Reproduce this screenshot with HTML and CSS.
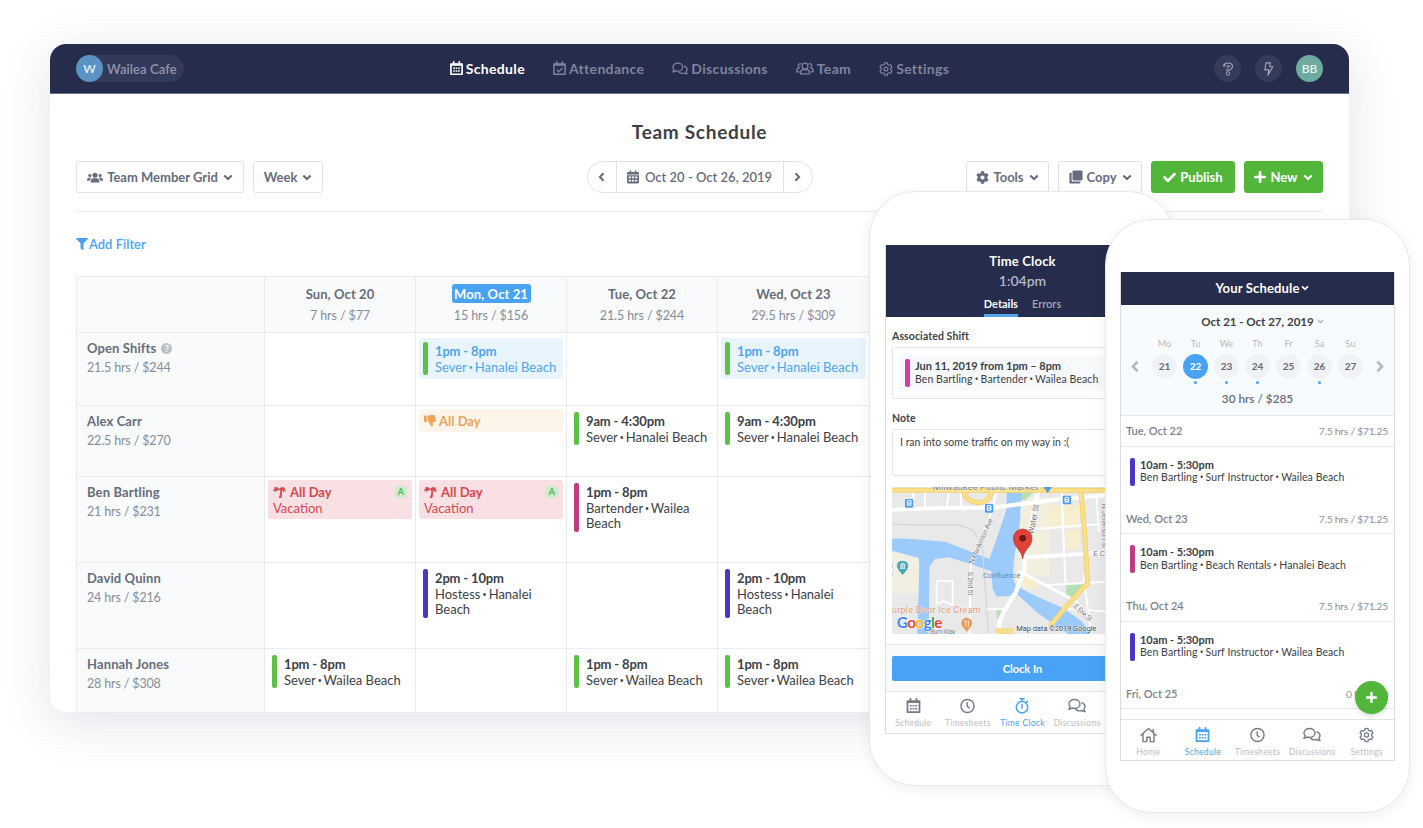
FILE: index.html
```html
<!DOCTYPE html>
<html lang="en">
<head>
  <meta charset="UTF-8" />
  <meta name="viewport" content="width=device-width, initial-scale=1.0"/>
  <title>Team Schedule</title>
  <link rel="stylesheet" href="styles.css">
</head>
<body>

<!-- icon set -->
<svg class="sprite" width="0" height="0">
  <symbol id="i-calendar" viewBox="0 0 14 16">
    <path d="M1 3.2h12v11H1zM4 0.8v2.4M10 0.8v2.4" fill="none" stroke="currentColor" stroke-width="1.8" stroke-linejoin="round" stroke-linecap="round"/>
    <path d="M1 3h12v2H1z" fill="currentColor"/>
    <path d="M3.5 7h1.8v1.6H3.5zM6.1 7h1.8v1.6H6.1zM8.7 7h1.8v1.6H8.7zM3.5 10h1.8v1.6H3.5zM6.1 10h1.8v1.6H6.1zM8.7 10h1.8v1.6H8.7z" fill="currentColor"/>
  </symbol>
  <symbol id="i-calendar-solid" viewBox="0 0 14 16">
    <path d="M4 0.9v3M10 0.9v3" stroke="currentColor" stroke-width="1.8" stroke-linecap="round"/>
    <path fill="currentColor" fill-rule="evenodd" d="M1.3 2.2h11.4Q14 2.2 14 3.5V5H0V3.5Q0 2.2 1.3 2.2zM0 5.9h14v8.3Q14 15.5 12.7 15.5H1.3Q0 15.5 0 14.2zM2 7.5v2h2.5v-2zM5.7 7.5v2h2.6v-2zM9.5 7.5v2H12v-2zM2 11.2v2h2.5v-2zM5.7 11.2v2h2.6v-2zM9.5 11.2v2H12v-2z"/>
  </symbol>
  <symbol id="i-calendar-check" viewBox="0 0 14 16">
    <path d="M1 3.2h12v11H1zM4 0.8v2.4M10 0.8v2.4" fill="none" stroke="currentColor" stroke-width="1.6" stroke-linejoin="round" stroke-linecap="round"/>
    <path d="M1 3h12v2H1z" fill="currentColor"/>
    <path d="M4 9.3l2.2 2.2 4-4" fill="none" stroke="currentColor" stroke-width="1.5"/>
  </symbol>
  <symbol id="i-comments" viewBox="0 0 18 15">
    <path d="M6.5 1C3.4 1 1 2.9 1 5.4c0 1.1.5 2.1 1.2 2.9-.2.9-.7 1.7-1.3 2.4 1.3 0 2.4-.5 3.2-1.2.7.2 1.5.4 2.4.4C9.6 9.9 12 7.9 12 5.4S9.6 1 6.5 1z" fill="none" stroke="currentColor" stroke-width="1.4" stroke-linejoin="round"/>
    <path d="M14 4.3c1.8.6 3 2 3 3.7 0 1.1-.5 2-1.2 2.7.2.9.7 1.7 1.3 2.4-1.3 0-2.4-.4-3.2-1.1-2.6.7-5 .2-6.4-1.3" fill="none" stroke="currentColor" stroke-width="1.4" stroke-linejoin="round" stroke-linecap="round"/>
  </symbol>
  <symbol id="i-users" viewBox="0 0 20 14">
    <g fill="none" stroke="currentColor" stroke-width="1.4" stroke-linejoin="round">
      <circle cx="10" cy="4.3" r="3.3"/>
      <path d="M5 13v-1.5c0-2 1.3-3.3 3-3.6l2 .6 2-.6c1.7.3 3 1.6 3 3.6V13z"/>
      <path d="M6 2.2C4.4 1 2.3 2.2 2.5 4.2c.1 1 .6 1.7 1.3 2C2 6.5.8 7.7.8 9.6v1.2H4M14 2.2c1.6-1.2 3.7 0 3.5 2-.1 1-.6 1.7-1.3 2 1.8.3 3 1.5 3 3.4v1.2H16"/>
    </g>
  </symbol>
  <symbol id="i-users-solid" viewBox="0 0 20 14">
    <g fill="currentColor">
      <circle cx="10" cy="4" r="3.2"/><circle cx="3.4" cy="4.6" r="2"/><circle cx="16.6" cy="4.6" r="2"/>
      <path d="M4.5 13v-1.3c0-2.3 1.6-3.7 3.5-3.7h4c1.9 0 3.5 1.4 3.5 3.7V13q0 .5-.5.5H5q-.5 0-.5-.5zM0 11V9.6C0 8.2 1 7.3 2.3 7.3h2c.5 0 .8.1 1.2.3C4 8.6 3.5 9.8 3.4 11zM20 11V9.6c0-1.4-1-2.3-2.3-2.3h-2c-.5 0-.8.1-1.2.3 1.5 1 2 2.2 2.1 3.4z"/>
    </g>
  </symbol>
  <symbol id="i-cog" viewBox="-24 -24 560 560">
    <path fill="none" stroke="currentColor" stroke-width="48" stroke-linejoin="round" d="M487.4 315.7l-42.6-24.6c4.3-23.2 4.3-47 0-70.2l42.6-24.6c4.9-2.8 7.1-8.6 5.5-14-11.1-35.6-30-67.8-54.7-94.6-3.8-4.1-10-5.1-14.8-2.3L380.8 110c-17.9-15.4-38.5-27.3-60.8-35.1V25.8c0-5.6-3.9-10.5-9.4-11.7-36.7-8.2-74.3-7.8-109.2 0-5.5 1.2-9.4 6.1-9.4 11.7V75c-22.2 7.9-42.8 19.8-60.8 35.1L88.7 85.5c-4.9-2.8-11-1.9-14.8 2.3-24.7 26.7-43.6 58.9-54.7 94.6-1.7 5.4.6 11.2 5.5 14L67.3 221c-4.3 23.2-4.3 47 0 70.2l-42.6 24.6c-4.9 2.8-7.1 8.6-5.5 14 11.1 35.6 30 67.8 54.7 94.6 3.8 4.1 10 5.1 14.8 2.3l42.6-24.6c17.9 15.4 38.5 27.3 60.8 35.1v49.2c0 5.6 3.9 10.5 9.4 11.7 36.7 8.2 74.3 7.8 109.2 0 5.5-1.2 9.4-6.1 9.4-11.7v-49.2c22.2-7.9 42.8-19.8 60.8-35.1l42.6 24.6c4.9 2.8 11 1.9 14.8-2.3 24.7-26.7 43.6-58.9 54.7-94.6 1.5-5.5-.7-11.3-5.6-14.1z"/>
    <circle cx="256" cy="256" r="78" fill="none" stroke="currentColor" stroke-width="48"/>
  </symbol>
  <symbol id="i-cog-solid" viewBox="0 0 512 512">
    <path fill="currentColor" d="M487.4 315.7l-42.6-24.6c4.3-23.2 4.3-47 0-70.2l42.6-24.6c4.9-2.8 7.1-8.6 5.5-14-11.1-35.6-30-67.8-54.7-94.6-3.8-4.1-10-5.1-14.8-2.3L380.8 110c-17.9-15.4-38.5-27.3-60.8-35.1V25.8c0-5.6-3.9-10.5-9.4-11.7-36.7-8.2-74.3-7.8-109.2 0-5.5 1.2-9.4 6.1-9.4 11.7V75c-22.2 7.9-42.8 19.8-60.8 35.1L88.7 85.5c-4.9-2.8-11-1.9-14.8 2.3-24.7 26.7-43.6 58.9-54.7 94.6-1.7 5.4.6 11.2 5.5 14L67.3 221c-4.3 23.2-4.3 47 0 70.2l-42.6 24.6c-4.9 2.8-7.1 8.6-5.5 14 11.1 35.6 30 67.8 54.7 94.6 3.8 4.1 10 5.1 14.8 2.3l42.6-24.6c17.9 15.4 38.5 27.3 60.8 35.1v49.2c0 5.6 3.9 10.5 9.4 11.7 36.7 8.2 74.3 7.8 109.2 0 5.5-1.2 9.4-6.1 9.4-11.7v-49.2c22.2-7.9 42.8-19.8 60.8-35.1l42.6 24.6c4.9 2.8 11 1.9 14.8-2.3 24.7-26.7 43.6-58.9 54.7-94.6 1.5-5.5-.7-11.3-5.6-14.1zM256 336c-44.1 0-80-35.9-80-80s35.9-80 80-80 80 35.9 80 80-35.9 80-80 80z"/>
  </symbol>
  <symbol id="i-question" viewBox="0 0 14 16">
    <path d="M3 5.2C3.5 2.9 5.1 2.5 7 2.5c2.1 0 3.7 1 3.7 2.7C10.7 7.5 7 7.3 7 10" fill="none" stroke="#a7abbd" stroke-width="4.4" stroke-linejoin="round"/>
    <path d="M4 5.1C4.5 3.2 5.6 2.6 7 2.6c2 0 3.5 1 3.5 2.6C10.5 7.3 7 7.3 7 9" fill="none" stroke="#353b5a" stroke-width="2.2"/>
    <circle cx="7" cy="13.2" r="2" fill="#353b5a" stroke="#a7abbd" stroke-width="1.1"/>
  </symbol>
  <symbol id="i-bolt" viewBox="0 0 12 16">
    <path d="M3.2 1h5L7.3 5.5H11L5.3 15l1.2-6H1.8z" fill="none" stroke="currentColor" stroke-width="1.2" stroke-linejoin="round"/>
  </symbol>
  <symbol id="i-down" viewBox="0 0 10 7">
    <path d="M1.3 1.4L5 5.1l3.7-3.7" fill="none" stroke="currentColor" stroke-width="2.1"/>
  </symbol>
  <symbol id="i-left" viewBox="0 0 7 10">
    <path d="M5.5 1.3L1.9 5l3.6 3.7" fill="none" stroke="currentColor" stroke-width="2"/>
  </symbol>
  <symbol id="i-right" viewBox="0 0 7 10">
    <path d="M1.5 1.3L5.1 5 1.5 8.7" fill="none" stroke="currentColor" stroke-width="2"/>
  </symbol>
  <symbol id="i-copy" viewBox="0 0 16 16">
    <rect x="4" y="0.5" width="11.5" height="11.5" rx="1.3" fill="currentColor"/>
    <path d="M3 3H1.8Q.5 3 .5 4.3v9.9q0 1.3 1.3 1.3h9.9q1.3 0 1.3-1.3V13H4.3Q3 13 3 11.7z" fill="currentColor"/>
  </symbol>
  <symbol id="i-check" viewBox="0 0 512 512">
    <path fill="currentColor" d="M173.898 439.404l-166.4-166.4c-9.997-9.997-9.997-26.206 0-36.204l36.203-36.204c9.997-9.998 26.207-9.998 36.204 0L192 312.69 432.095 72.596c9.997-9.997 26.207-9.997 36.204 0l36.203 36.204c9.997 9.997 9.997 26.206 0 36.204l-294.4 294.401c-9.998 9.997-26.207 9.997-36.204-.001z"/>
  </symbol>
  <symbol id="i-plus" viewBox="0 0 12 12">
    <path d="M6 1.2v9.6M1.2 6h9.6" stroke="currentColor" stroke-width="2.7" stroke-linecap="round"/>
  </symbol>
  <symbol id="i-filter" viewBox="0 0 512 512">
    <path fill="currentColor" d="M487.976 0H24.028C2.71 0-8.047 25.866 7.058 40.971L192 225.941V432c0 7.831 3.821 15.17 10.237 19.662l80 55.98C298.02 518.69 320 507.493 320 487.98V225.941l184.947-184.97C520.021 25.896 509.338 0 487.976 0z"/>
  </symbol>
  <symbol id="i-thumb" viewBox="0 0 12 12">
    <path fill="currentColor" d="M.6.6h2.2v6.3H.6q-.6 0-.6-.6V1.2Q0 .6.6.6zM3.6.9C5 .2 6 0 7 0h2.4c1 0 1.5.6 1.4 1.4.6.4.8 1 .5 1.7.6.5.7 1.2.4 1.8.6 1 .1 2-1 2H8.4c.5 1.3.8 2.5.4 3.7-.4 1.3-2 1.2-2.2 0C6.3 8.8 5.5 8 4.5 6.9l-.9-.6z"/>
  </symbol>
  <symbol id="i-palm" viewBox="0 0 13 12">
    <path fill="currentColor" d="M6 3.2C5.3 1 2.7.2.9 1.7L2 2.3C.7 2.7 0 3.9.2 5.2l1.9-.9-.2 1.9L4.6 4.3l1.5-.4h1C7.6 6.3 7 9.2 5.7 12h2.6c.8-2.6 1-5.3.5-7.7l1.1.4.7 1.6.9-1.2 1.3.8c-.1-1.5-.9-2.5-2.2-2.8l1.8-.6C10.7.6 7.2 1 6 3.2z"/>
  </symbol>
  <symbol id="i-clock" viewBox="0 0 16 16">
    <circle cx="8" cy="8" r="7" fill="none" stroke="currentColor" stroke-width="1.5"/>
    <path d="M7.7 4v4.4l2.5 1.9" fill="none" stroke="currentColor" stroke-width="1.5"/>
  </symbol>
  <symbol id="i-stopwatch" viewBox="0 0 14 16">
    <circle cx="7" cy="9.3" r="5.7" fill="none" stroke="currentColor" stroke-width="1.5"/>
    <path d="M5 .8h4M7 .8v2.6M7 6.5v3.7M11.3 4.2l1-1" stroke="currentColor" stroke-width="1.5" stroke-linecap="round"/>
  </symbol>
  <symbol id="i-home" viewBox="0 0 18 16">
    <path d="M1 8.2L9 1.2l8 7M3.2 6.8V15h4v-4.6h3.6V15h4V6.8M14 2v3" fill="none" stroke="currentColor" stroke-width="1.5" stroke-linecap="round" stroke-linejoin="round"/>
  </symbol>
</svg>

<div class="window">
  <header class="navbar">
    <div class="nav-side">
      <div class="workplace"><span class="avatar blue">W</span>Wailea Cafe</div>
    </div>
    <nav class="nav-links">
      <a class="active"><svg width="13" height="15"><use href="#i-calendar"/></svg>Schedule</a>
      <a><svg width="13" height="15"><use href="#i-calendar-check"/></svg>Attendance</a>
      <a><svg width="16" height="14"><use href="#i-comments"/></svg>Discussions</a>
      <a><svg width="18" height="13"><use href="#i-users"/></svg>Team</a>
      <a><svg width="14" height="14"><use href="#i-cog"/></svg>Settings</a>
    </nav>
    <div class="nav-side right">
      <span class="avatar dim"><svg width="12" height="14"><use href="#i-question"/></svg></span>
      <span class="avatar dim"><svg width="11" height="14"><use href="#i-bolt"/></svg></span>
      <span class="avatar green">BB</span>
    </div>
  </header>

  <main class="content">
    <h1>Team Schedule</h1>

    <div class="toolbar">
      <div class="tool-side">
        <button class="btn w-grid"><svg width="16" height="11"><use href="#i-users-solid"/></svg>Team Member Grid<svg class="caret" width="10" height="7"><use href="#i-down"/></svg></button>
        <button class="btn w-week">Week<svg class="caret" width="10" height="7"><use href="#i-down"/></svg></button>
      </div>
      <div class="date-nav">
        <span class="arrow"><svg width="7" height="10"><use href="#i-left"/></svg></span>
        <span class="range"><svg width="12" height="14"><use href="#i-calendar-solid"/></svg>Oct 20 - Oct 26, 2019</span>
        <span class="arrow"><svg width="7" height="10"><use href="#i-right"/></svg></span>
      </div>
      <div class="tool-side right">
        <button class="btn w-tools"><svg width="13" height="13"><use href="#i-cog-solid"/></svg>Tools<svg class="caret" width="10" height="7"><use href="#i-down"/></svg></button>
        <button class="btn w-copy"><svg width="14" height="14"><use href="#i-copy"/></svg>Copy<svg class="caret" width="10" height="7"><use href="#i-down"/></svg></button>
        <button class="btn green w-publish"><svg width="13" height="13"><use href="#i-check"/></svg>Publish</button>
        <button class="btn green w-new"><svg width="12" height="12"><use href="#i-plus"/></svg>New<svg class="caret" width="10" height="7"><use href="#i-down"/></svg></button>
      </div>
    </div>

    <a class="filter"><svg width="12" height="12"><use href="#i-filter"/></svg>Add Filter</a>

    <div class="grid">
      <div class="cell head"></div>
      <div class="cell head"><b>Sun, Oct 20</b><span>7 hrs / $77</span></div>
      <div class="cell head"><b class="today">Mon, Oct 21</b><span>15 hrs / $156</span></div>
      <div class="cell head"><b>Tue, Oct 22</b><span>21.5 hrs / $244</span></div>
      <div class="cell head"><b>Wed, Oct 23</b><span>29.5 hrs / $309</span></div>

      <div class="cell name"><b>Open Shifts <i class="help">?</i></b><span>21.5 hrs / $244</span></div>
      <div class="cell"></div>
      <div class="cell"><div class="shift open"><i class="bar"></i><p><b>1pm - 8pm</b>Sever <i class="sep">•</i> Hanalei Beach</p></div></div>
      <div class="cell"></div>
      <div class="cell"><div class="shift open"><i class="bar"></i><p><b>1pm - 8pm</b>Sever <i class="sep">•</i> Hanalei Beach</p></div></div>

      <div class="cell name"><b>Alex Carr</b><span>22.5 hrs / $270</span></div>
      <div class="cell"></div>
      <div class="cell"><div class="off orange"><b><svg width="12" height="12"><use href="#i-thumb"/></svg>All Day</b></div></div>
      <div class="cell"><div class="shift"><i class="bar"></i><p><b>9am - 4:30pm</b>Sever <i class="sep">•</i> Hanalei Beach</p></div></div>
      <div class="cell"><div class="shift"><i class="bar"></i><p><b>9am - 4:30pm</b>Sever <i class="sep">•</i> Hanalei Beach</p></div></div>

      <div class="cell name"><b>Ben Bartling</b><span>21 hrs / $231</span></div>
      <div class="cell"><div class="off red"><b><svg width="13" height="12"><use href="#i-palm"/></svg>All Day<i class="tag">A</i></b>Vacation</div></div>
      <div class="cell"><div class="off red"><b><svg width="13" height="12"><use href="#i-palm"/></svg>All Day<i class="tag">A</i></b>Vacation</div></div>
      <div class="cell"><div class="shift"><i class="bar pink"></i><p><b>1pm - 8pm</b>Bartender <i class="sep">•</i> Wailea<br>Beach</p></div></div>
      <div class="cell"></div>

      <div class="cell name"><b>David Quinn</b><span>24 hrs / $216</span></div>
      <div class="cell"></div>
      <div class="cell"><div class="shift"><i class="bar purple"></i><p><b>2pm - 10pm</b>Hostess <i class="sep">•</i> Hanalei<br>Beach</p></div></div>
      <div class="cell"></div>
      <div class="cell"><div class="shift"><i class="bar purple"></i><p><b>2pm - 10pm</b>Hostess <i class="sep">•</i> Hanalei<br>Beach</p></div></div>

      <div class="cell name"><b>Hannah Jones</b><span>28 hrs / $308</span></div>
      <div class="cell"><div class="shift"><i class="bar"></i><p><b>1pm - 8pm</b>Sever <i class="sep">•</i> Wailea Beach</p></div></div>
      <div class="cell"></div>
      <div class="cell"><div class="shift"><i class="bar"></i><p><b>1pm - 8pm</b>Sever <i class="sep">•</i> Wailea Beach</p></div></div>
      <div class="cell"><div class="shift"><i class="bar"></i><p><b>1pm - 8pm</b>Sever <i class="sep">•</i> Wailea Beach</p></div></div>
    </div>
  </main>
</div>

<!-- time clock phone -->
<div class="phone phone-clock">
  <div class="screen">
    <div class="clock-head">
      <b>Time Clock</b>
      <span>1:04pm</span>
      <div class="clock-tabs"><a class="active">Details</a><a>Errors</a></div>
    </div>
    <div class="clock-body">
      <label>Associated Shift</label>
      <div class="box shift-box">
        <div class="m-shift"><i class="bar magenta"></i><p><b>Jun 11, 2019 from 1pm – 8pm</b>Ben Bartling <i class="sep">•</i> Bartender <i class="sep">•</i> Wailea Beach</p></div>
      </div>
      <label>Note</label>
      <div class="box note-box">I ran into some traffic on my way in :(</div>
      <svg class="map" width="262" height="147" viewBox="36 36 786 441">
        <rect x="36" y="36" width="786" height="441" fill="#e9e9ea"/>
        <path d="M410 70h100v230H410z" fill="#f3efdf"/>
        <path d="M500 90h100v70H500zM555 165h45v60h-45zM400 300l60 0 20 40-50 0z" fill="#f6eecf"/>
        <path d="M36 230h80v125H36z" fill="#f1eee2"/>
        <path d="M560 328h50l-30 40h-24zM350 403h16v16l-16 12zM420 52h40l-24 24h-16z" fill="#b5dfb6"/>
        <!-- river -->
        <path fill="#9ccbfb" d="M380 52h44l-4 90-18 110-4 58 10 22 60 32 80 34 56 40 30 39h-70l-90-62-68-62-18 10-38 2-12-24-4-52-80-28-50-14-40 6-16 24-2 200h-34l6-200-2-28-80-22V190l60 2 100 8 66 26 66 26 22-60 30-90z"/>
        <!-- minor streets -->
        <path d="M36 148l110 2 90 0 40 14 30 40 10 140 10 130" stroke="#d6d7d9" stroke-width="4" fill="none"/>
        <g stroke="#fff" fill="none" stroke-linejoin="round">
          <path d="M36 104l170-6 130 0 190-24 150-14" stroke-width="12"/>
          <path d="M474 50l-34 160-8 80-24 60-42 70-16 57" stroke-width="13"/>
          <path d="M440 247l240-15" stroke-width="11"/>
          <path d="M432 165l230-18M505 330l175-10M320 403h60M545 50l8 190 4 90M610 300l24 180M650 60l6 110M135 50v50M100 50v48M207 50l-7 48M243 50v48M350 50l-22 80-55 130-5 217" stroke-width="6"/>
          <path d="M420 290l170 90 40 58" stroke-width="9"/>
          <path d="M170 318h48v72l-28-12-20 8zM560 400l120 10" stroke-width="5"/>
        </g>
        <!-- main roads -->
        <g stroke="#f2d06b" stroke-width="15" fill="none"><path d="M36 46h640M603 50l12 140 8 134-72 80-42 50M252 50c4 40 78 48 80 0M345 468h55"/></g>
        <g stroke="#fbe08a" stroke-width="10" fill="none"><path d="M36 46h640M603 50l12 140 8 134-72 80-42 50M252 50c4 40 78 48 80 0M345 468h55"/></g>
        <!-- transit stops -->
        <g fill="#4a9cf0"><rect x="75" y="72" width="25" height="26" rx="4"/><rect x="315" y="87" width="25" height="26" rx="4"/><rect x="548" y="62" width="25" height="26" rx="4"/><path d="M490 36h26l-13 18z"/></g>
        <g fill="none" stroke="#fff" stroke-width="3"><path d="M82 77h11v13H82zM82 84h11M83 94l3-3M92 94l-3-3M322 92h11v13h-11zM322 99h11M323 109l3-3M332 109l-3-3M555 67h11v13h-11zM555 74h11M556 84l3-3M565 84l-3-3"/></g>
        <path d="M68 300l-12-14c-12-24 2-28 12-28s24 6 12 28z" fill="#4aa8b8"/><circle cx="68" cy="273" r="16" fill="#4aa8b8"/>
        <path d="M60 280h16M60 270h16l-8-6zM63 271v8M68 271v8M73 271v8" stroke="#fff" stroke-width="2.5" fill="none"/>
        <path d="M260 470l-14-18h28z" fill="#f0984f"/><circle cx="260" cy="444" r="16" fill="#f0984f"/>
        <path d="M255 436v7q0 3 2 3v9M265 436v19M259 436v7" stroke="#fff" stroke-width="2.5" fill="none"/>
        <!-- labels -->
        <g class="map-text">
          <text x="158" y="45" class="market" textLength="316">Milwaukee Public Market</text>
          <text x="36" y="413" class="poi" textLength="266">urple Door Ice Cream</text>
          <text x="309" y="308" class="water" textLength="112">Confluence</text>
          <text transform="translate(279 268) rotate(-66)" textLength="146">N Plankinton Ave</text>
          <text transform="translate(263 290) rotate(90)" textLength="72">S 2nd St</text>
          <text transform="translate(460 178) rotate(-79)" class="road" textLength="90">Water St</text>
          <text transform="translate(666 86) rotate(90)" textLength="134">N Jefferson St</text>
          <text x="640" y="242" class="road">E C</text>
          <text transform="translate(580 396) rotate(42)" textLength="66">E Erie St</text>
          <text x="150" y="478" textLength="76">Bum Way</text>
          <text x="33" y="278">l</text><text x="33" y="303">l</text>
          <text x="409" y="469" class="credit" textLength="240">Map data ©2019 Google</text>
        </g>
        <text x="50" y="459" class="google" textLength="137"><tspan fill="#4285f4">G</tspan><tspan fill="#ea4335">o</tspan><tspan fill="#fbbc05">o</tspan><tspan fill="#4285f4">g</tspan><tspan fill="#34a853">l</tspan><tspan fill="#ea4335">e</tspan></text>
        <!-- pin -->
        <path d="M428 252c-2-26-28-36-28-62a28 28 0 0 1 56 0c0 26-26 36-28 62z" fill="#dd4339" stroke="#b73229" stroke-width="2"/>
        <circle cx="428" cy="190" r="10" fill="#6b1a15"/>
      </svg>
    </div>
    <div class="clock-action"><button>Clock In</button></div>
    <div class="tabbar">
      <a><svg width="15" height="16"><use href="#i-calendar"/></svg>Schedule</a>
      <a><svg width="15" height="15"><use href="#i-clock"/></svg>Timesheets</a>
      <a class="active"><svg width="14" height="16"><use href="#i-stopwatch"/></svg>Time Clock</a>
      <a><svg width="18" height="15"><use href="#i-comments"/></svg>Discussions</a>
      <a></a>
    </div>
  </div>
</div>

<!-- schedule phone -->
<div class="phone phone-schedule">
  <div class="screen">
    <div class="sched-head">Your Schedule<svg width="8" height="6"><use href="#i-down"/></svg></div>
    <div class="week">
      <div class="week-range">Oct 21 - Oct 27, 2019<svg width="7" height="5"><use href="#i-down"/></svg></div>
      <div class="days">
        <svg class="prev" width="10" height="13"><use href="#i-left"/></svg>
        <div class="day"><span>Mo</span><b>21</b></div>
        <div class="day on dot"><span>Tu</span><b>22</b></div>
        <div class="day dot"><span>We</span><b>23</b></div>
        <div class="day dot"><span>Th</span><b>24</b></div>
        <div class="day"><span>Fr</span><b>25</b></div>
        <div class="day dot"><span>Sa</span><b>26</b></div>
        <div class="day"><span>Su</span><b>27</b></div>
        <svg class="next" width="10" height="13"><use href="#i-right"/></svg>
      </div>
      <div class="week-total">30 hrs / $285</div>
    </div>
    <div class="list">
      <div class="list-head"><b>Tue, Oct 22</b><span>7.5 hrs / $71.25</span></div>
      <div class="m-shift"><i class="bar purple"></i><p><b>10am - 5:30pm</b>Ben Bartling <i class="sep">•</i> Surf Instructor <i class="sep">•</i> Wailea Beach</p></div>
      <div class="list-head"><b>Wed, Oct 23</b><span>7.5 hrs / $71.25</span></div>
      <div class="m-shift"><i class="bar pink"></i><p><b>10am - 5:30pm</b>Ben Bartling <i class="sep">•</i> Beach Rentals <i class="sep">•</i> Hanalei Beach</p></div>
      <div class="list-head"><b>Thu, Oct 24</b><span>7.5 hrs / $71.25</span></div>
      <div class="m-shift"><i class="bar purple"></i><p><b>10am - 5:30pm</b>Ben Bartling <i class="sep">•</i> Surf Instructor <i class="sep">•</i> Wailea Beach</p></div>
      <div class="list-head"><b>Fri, Oct 25</b><span>0 hrs / $0</span></div>
      <button class="fab"><svg width="11" height="11"><use href="#i-plus"/></svg></button>
    </div>
    <div class="tabbar">
      <a><svg width="17" height="15"><use href="#i-home"/></svg>Home</a>
      <a class="active"><svg width="15" height="16"><use href="#i-calendar"/></svg>Schedule</a>
      <a><svg width="15" height="15"><use href="#i-clock"/></svg>Timesheets</a>
      <a><svg width="18" height="15"><use href="#i-comments"/></svg>Discussions</a>
      <a><svg width="15" height="15"><use href="#i-cog"/></svg>Settings</a>
    </div>
  </div>
</div>

</body>
</html>
```

FILE: styles.css
```css
* { box-sizing: border-box; }
body {
  font-family: Lato, "Open Sans", sans-serif;
  margin: 0; padding: 44px 0 0 50px;
  width: 1423px;
  height: 828px;
  overflow: hidden;
  position: relative;
  background: #fff;
  font-size: 13px;
  color: #3c4148;
}
h1, p { margin: 0; }
b { font-weight: 700; }
i { font-style: normal; }
svg { display: block; flex: none; }
.sprite { position: absolute; }
button { font-family: inherit; padding: 0; margin: 0; border: none; }

.window {
  width: 1299px;
  height: 668px;
  border-radius: 16px;
  overflow: hidden;
  background: #fff;
  box-shadow: 0 10px 50px rgba(40,60,100,0.14);
}

/* navbar */
.navbar {
  height: 50px;
  padding: 0 26px;
  display: flex;
  align-items: center;
  background: #262c4b;
  border-bottom: 1px solid #6b7088;
}
.nav-side { flex: 1; display: flex; }
.nav-side.right { justify-content: flex-end; gap: 14px; }
.workplace {
  display: flex;
  align-items: center;
  gap: 4px;
  height: 27px;
  padding-right: 7px;
  border-radius: 14px;
  background: #333958;
  color: #9196ae;
  font-weight: 600;
  letter-spacing: 0.1px;
}
.avatar {
  width: 27px;
  height: 27px;
  border-radius: 50%;
  display: flex;
  align-items: center;
  justify-content: center;
  color: #e8f2f3;
  font-size: 12px;
  font-weight: 600;
}
.avatar.blue { background: #5b93c4; }
.avatar.green { background: #6cab9d; }
.avatar.dim { background: #353b5a; color: #a7abbd; }
.nav-links { display: flex; gap: 28px; }
.nav-links a {
  display: flex;
  align-items: center;
  gap: 3px;
  color: #7f849e;
  font-size: 14px;
  font-weight: 700;
  letter-spacing: 0.33px;
}
.nav-links .active { color: #fff; }

/* page */
.content { padding: 0 26px; }
h1 {
  margin-top: 26px;
  height: 24px;
  line-height: 24px;
  text-align: center;
  font-size: 19px;
  letter-spacing: 0.7px;
}
.toolbar {
  display: flex;
  align-items: center;
  margin-top: 17px;
  padding-bottom: 18px;
  border-bottom: 1px solid #e9ebed;
}
.tool-side { flex: 1; display: flex; gap: 9px; }
.tool-side.right { justify-content: flex-end; }
.btn {
  height: 32px;
  display: flex;
  align-items: center;
  justify-content: center;
  gap: 4px;
  border: 1px solid #dfe2e6;
  border-radius: 3px;
  background: #fff;
  color: #666c7d;
  font-size: 13px;
  font-weight: 700;
}
.btn .caret { margin-left: 1px; }
.btn.green { background: #52b63b; border-color: #52b63b; color: #fff; }
.w-grid { width: 168px; }
.w-week { width: 70px; }
.w-tools { width: 83px; }
.w-copy { width: 84px; }
.w-publish { width: 84px; }
.w-new { width: 79px; }
.date-nav {
  display: flex;
  width: 226px;
  height: 32px;
  border: 1px solid #dfe2e6;
  border-radius: 16px;
  color: #666c7d;
  font-weight: 600;
}
.date-nav span { display: flex; align-items: center; justify-content: center; }
.date-nav .arrow { flex: 1; }
.date-nav .range {
  width: 168px;
  gap: 6px;
  border: solid #dfe2e6;
  border-width: 0 1px;
}
.filter {
  display: flex;
  align-items: center;
  gap: 1px;
  height: 20px;
  margin: 22px 0 22px 0;
  color: #48a3f3;
  font-weight: 600;
}

/* schedule grid */
.grid {
  display: grid;
  grid-template-columns: 188px 151px 151px 151px 152px;
  grid-template-rows: 56px 73px 71px 86px 86px 72px;
  width: 794px;
  border-top: 1px solid #e9ecef;
  border-left: 1px solid #e9ecef;
}
.cell {
  border-right: 1px solid #e9ecef;
  border-bottom: 1px solid #e9ecef;
  padding: 3px;
}
.head {
  background: #f8fafc;
  text-align: center;
  color: #666c78;
  padding-top: 7px;
}
.head b, .head span { display: block; line-height: 20px; }
.head b { letter-spacing: 0.1px; }
.head span { color: #878d98; font-size: 12.5px; letter-spacing: -0.1px; line-height: 23px; }
.head .today {
  width: 79px;
  height: 19px;
  margin: 0 auto 1px;
  border-radius: 3px;
  background: #48a3f3;
  color: #fff;
}
.name { background: #f8fafc; padding: 6px 10px; color: #676d79; }
.name b, .name span { display: flex; align-items: center; line-height: 19px; }
.name b { letter-spacing: 0.12px; }
.name span { color: #878d98; font-size: 12.5px; letter-spacing: -0.15px; }
.help {
  width: 11px;
  height: 11px;
  margin-left: 5px;
  border-radius: 50%;
  background: #bcbfc4;
  color: #fff;
  font-size: 9px;
  line-height: 11px;
  text-align: center;
}
.shift { display: flex; padding: 3px 4px; line-height: 15.5px; }
.shift p { padding: 2px 0 0 7px; white-space: nowrap; }
.shift b { display: block; letter-spacing: -0.15px; }
.shift .sep { margin: 0 -1.5px; }
.shift.open { margin-top: 2px; padding: 4px; background: #e9f5fe; color: #4fa5f0; border-radius: 3px; }
.sep { font-family: "Open Sans", sans-serif; font-size: 12px; line-height: 1; }
.bar { width: 5px; border-radius: 2px; background: #5cc244; flex: none; }
.bar.pink { background: #bd3d80; }
.bar.purple { background: #4736c8; }
.bar.magenta { background: #cf3cae; }
.off { padding: 4px 5px 3px; border-radius: 3px; line-height: 16px; }
.off b { display: flex; align-items: center; gap: 4px; }
.off.orange { background: #fdf5ea; color: #eaa45c; }
.off.orange b { gap: 3px; }
.off.red { background: #f8e0e4; color: #d6494c; }
.tag {
  width: 12px;
  height: 12px;
  margin-left: auto;
  border-radius: 3px;
  background: #cdeccb;
  color: #4fb547;
  font-size: 9px;
  line-height: 12px;
  text-align: center;
}

/* phones */
.phone {
  position: absolute;
  width: 305px;
  height: 595px;
  padding: 53px 15px;
  border: 1px solid #e6e8eb;
  border-radius: 46px;
  background: #fff;
  box-shadow: 0 3px 14px rgba(30,40,60,0.07);
}
.phone-clock { left: 869px; top: 191px; }
.phone-schedule { left: 1105px; top: 219px; height: 594px; padding: 52px 14px; }
.screen {
  width: 275px;
  height: 489px;
  display: flex;
  flex-direction: column;
  border: 1px solid #d9dde1;
  border-top: none;
  overflow: hidden;
}
.clock-head {
  height: 72px;
  flex: none;
  padding-top: 6px;
  background: #262c4b;
  color: #fff;
  display: flex;
  flex-direction: column;
  align-items: center;
  line-height: 20px;
}
.clock-head b { letter-spacing: 0.2px; }
.clock-head span { font-size: 14px; color: #b3b7c9; font-weight: 600; }
.clock-tabs { display: flex; gap: 14px; margin-top: auto; font-size: 11px; font-weight: 600; color: #a3a8bd; }
.clock-tabs a { height: 23px; }
.clock-tabs .active { color: #fff; font-weight: 700; border-bottom: 3px solid #55a4ea; }
.clock-body { padding: 0 6px; flex: 1; }
.clock-body label {
  display: block;
  height: 30px;
  padding-top: 13px;
  line-height: 13px;
  font-size: 10.5px;
  font-weight: 700;
  letter-spacing: 0.1px;
}
.box { border: 1px solid #e2e6ea; border-radius: 2px; }
.shift-box { height: 52px; padding: 7px; }
.shift-box .m-shift { height: 36px; padding: 4px 5px; background: #f8f9fb; }
.note-box { height: 47px; padding: 5px 7px; font-size: 10.5px; line-height: 14px; }
.clock-body .map { margin-top: 11px; }
.m-shift { display: flex; font-size: 10.5px; line-height: 13.5px; letter-spacing: 0.08px; }
.m-shift .bar { height: 28px; }
.m-shift .sep { font-size: 10px; margin: 0 -0.7px; }
.m-shift p { padding-left: 5px; white-space: nowrap; }
.m-shift b { display: block; font-size: 11px; letter-spacing: -0.05px; }
.map-text { font-family: Roboto, sans-serif; font-size: 21px; fill: #75787d; stroke: #fff; stroke-width: 2px; paint-order: stroke; }
.map-text .market { font-size: 28px; }
.map-text .poi { font-size: 27px; fill: #df9371; }
.map-text .water { font-size: 22px; fill: #5b8fc9; stroke: none; }
.map-text .road { font-size: 24px; }
.map-text .credit { font-size: 23px; fill: #444; }
.google { font-family: Lato, sans-serif; font-size: 46px; font-weight: 700; stroke: #fff; stroke-width: 3px; paint-order: stroke; }
.clock-action {
  height: 47px;
  flex: none;
  padding: 11px 6px;
  border-top: 1px solid #e2e6ea;
  background: #f8fafc;
}
.clock-action button {
  width: 100%;
  height: 25px;
  border-radius: 2px;
  background: #48a3f7;
  color: #fff;
  font-size: 11px;
  font-weight: 700;
}
.tabbar {
  height: 42px;
  flex: none;
  display: flex;
  border-top: 1px solid #dfe2e6;
  background: #fff;
}
.tabbar a {
  flex: 1 0 0;
  width: 0;
  display: flex;
  flex-direction: column;
  align-items: center;
  padding-top: 6px;
  font-size: 8.5px;
  letter-spacing: 0.3px;
  line-height: 10px;
  color: #b9bdc4;
  white-space: nowrap;
}
.tabbar svg { height: 16px; margin-bottom: 4px; color: #757b89; }
.tabbar .active, .tabbar .active svg { color: #48a3f3; }
.phone-schedule .tabbar { height: 41px; }
.phone-schedule .tabbar a { padding-top: 7px; }

/* phone schedule */
.sched-head {
  height: 33px;
  flex: none;
  display: flex;
  align-items: center;
  justify-content: center;
  gap: 2px;
  padding: 0 0 2px 10px;
  background: #262c4b;
  color: #fff;
  font-size: 13px;
  font-weight: 700;
  letter-spacing: 0.15px;
}
.week {
  height: 111px;
  flex: none;
  padding-top: 8px;
  border-bottom: 1px solid #e4e8eb;
  background: #f8fbfd;
  text-align: center;
}
.week-range {
  display: flex;
  align-items: center;
  justify-content: center;
  gap: 3px;
  height: 17px;
  padding-left: 10px;
  font-size: 11.5px;
  font-weight: 700;
}
.week-range svg { color: #b4b8bf; }
.days { display: flex; justify-content: center; height: 55px; margin-top: 7px; }
.days svg { color: #b4b8bf; margin-top: 23px; }
.prev { margin-right: 9px; }
.next { margin-left: 9px; }
.day { width: 31px; }
.day span { display: block; font-size: 9px; line-height: 14px; color: #b4b8bf; }
.day b {
  display: block;
  width: 25px;
  height: 25px;
  margin: 3px auto 0;
  border-radius: 50%;
  background: #f0f2f5;
  color: #666c78;
  font-size: 10px;
  line-height: 25px;
}
.day.on b { background: #48a3f7; color: #fff; }
.day.dot::after {
  content: "";
  display: block;
  width: 3px;
  height: 3px;
  margin: 2px auto 0;
  border-radius: 50%;
  background: #48a3f3;
}
.week-total { color: #666c7d; font-size: 11.8px; line-height: 14px; font-weight: 600; }
.list { flex: 1; height: 0; position: relative; }
.list-head {
  display: flex;
  justify-content: space-between;
  height: 30.5px;
  line-height: 30px;
  padding: 0 6px 0 5px;
  border-bottom: 1px solid #e6e9ec;
  font-size: 11px;
  color: #7c818d;
}
.list-head b { font-weight: 600; }
.list-head span { font-size: 10.3px; letter-spacing: -0.25px; color: #8b909a; }
.list .m-shift { height: 57px; padding: 11px 0 0 9px; }
.fab {
  position: absolute;
  right: 6px;
  bottom: 5px;
  width: 33px;
  height: 33px;
  border-radius: 50%;
  background: #52b63b;
  color: #fff;
  display: flex;
  align-items: center;
  justify-content: center;
  box-shadow: 0 2px 5px rgba(0,0,0,0.15);
}
```
